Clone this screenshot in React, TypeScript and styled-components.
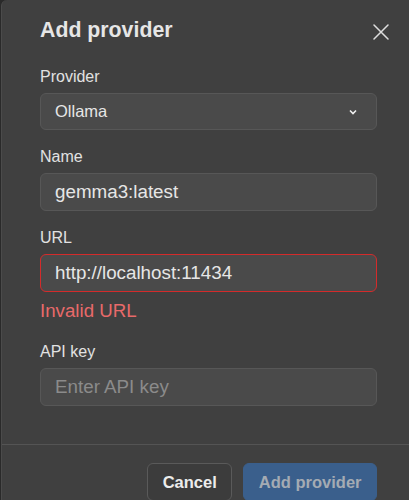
import React from "react";
import styled, { createGlobalStyle, css } from "styled-components";

const Global = createGlobalStyle`
  html, body { margin: 0; padding: 0; }
  body {
    background: #2a2a2a;
    height: 500px;
    overflow: hidden;
    font-family: "Liberation Sans", Arial, sans-serif;
  }
  * { box-sizing: border-box; }
`;

const Modal = styled.div`
  margin-left: 1px;
  width: 414px;
  height: 520px;
  background: #404040;
  border-left: 1px solid #4b4b4b;
  border-top-left-radius: 6px;
  display: flex;
  flex-direction: column;
`;

const Header = styled.div`
  display: flex;
  align-items: center;
  justify-content: space-between;
  padding: 18px 26px 0 38px;
  height: 42px;
`;

const Title = styled.h2`
  margin: 0;
  font-size: 21.3px;
  line-height: 24px;
  font-weight: 700;
  color: #e6e6e6;
`;

const CloseButton = styled.button`
  border: none;
  background: none;
  padding: 0;
  width: 17px;
  height: 17px;
  display: flex;
  align-items: center;
  justify-content: center;
  margin-top: 3px;
  cursor: pointer;
`;

const Form = styled.div`
  display: flex;
  flex-direction: column;
  padding: 25px 38px 38px 38px;
`;

const Field = styled.div<{ $gapTop?: number }>`
  display: flex;
  flex-direction: column;
  gap: 7px;
  margin-top: ${(p) => p.$gapTop ?? 0}px;
`;

const Label = styled.label`
  font-size: 16px;
  line-height: 19px;
  color: #e2e2e2;
`;

const fieldBox = css`
  width: 100%;
  background: #4a4a4a;
  border: 1px solid #575757;
  border-radius: 6px;
  padding: 0 14px;
  color: #e6e6e6;
  font-family: "Liberation Sans", Arial, sans-serif;
  outline: none;
`;

const Input = styled.input<{ $invalid?: boolean }>`
  ${fieldBox};
  height: 38px;
  font-size: 18.8px;
  border-color: ${(p) => (p.$invalid ? "#d42b2b" : "#575757")};
  &::placeholder { color: #8b8b8b; }
`;

const Select = styled.div`
  ${fieldBox};
  height: 37px;
  display: flex;
  align-items: center;
  justify-content: space-between;
  font-size: 16.5px;
  padding-right: 19px;
`;

const ErrorText = styled.div`
  margin-top: 8px;
  font-size: 18.7px;
  line-height: 22px;
  color: #e86a6a;
`;

const Footer = styled.div`
  border-top: 1px solid #545454;
  padding: 18px 38px 0 38px;
  display: flex;
  justify-content: flex-end;
  gap: 11px;
`;

const Button = styled.button<{ $primary?: boolean }>`
  height: 38px;
  padding: 0 14.5px;
  border-radius: 6px;
  font-family: "Liberation Sans", Arial, sans-serif;
  font-size: 16.5px;
  font-weight: 700;
  ${(p) =>
    p.$primary
      ? css`
          background: #3a5f8c;
          border: 1px solid #3a5f8c;
          color: #a4abb3;
        `
      : css`
          background: #3c3c3c;
          border: 1px solid #5a5a5a;
          color: #ececec;
        `}
`;

export default function App() {
  return (
    <>
      <Global />
      <Modal>
        <Header>
          <Title>Add provider</Title>
          <CloseButton aria-label="Close">
            <svg width="16" height="16" viewBox="0 0 16 16">
              <path d="M1 1 L15 15 M15 1 L1 15" stroke="#dedede" strokeWidth="1.5" strokeLinecap="round" />
            </svg>
          </CloseButton>
        </Header>
        <Form>
          <Field>
            <Label>Provider</Label>
            <Select>
              <span>Ollama</span>
              <svg width="8" height="6" viewBox="0 0 8 6">
                <path d="M1 1.5 L4 4.5 L7 1.5" stroke="#f0f0f0" strokeWidth="1.6" fill="none" />
              </svg>
            </Select>
          </Field>
          <Field $gapTop={17}>
            <Label>Name</Label>
            <Input defaultValue="gemma3:latest" />
          </Field>
          <Field $gapTop={17}>
            <Label>URL</Label>
            <Input $invalid defaultValue="http://localhost:11434" />
          </Field>
          <ErrorText>Invalid URL</ErrorText>
          <Field $gapTop={20}>
            <Label>API key</Label>
            <Input placeholder="Enter API key" />
          </Field>
        </Form>
        <Footer>
          <Button>Cancel</Button>
          <Button $primary>Add provider</Button>
        </Footer>
      </Modal>
    </>
  );
}
